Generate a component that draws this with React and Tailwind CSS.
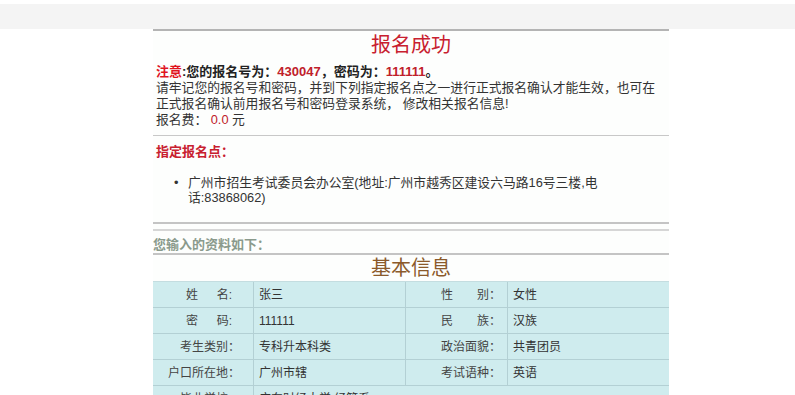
import React from "react";

const font = { fontFamily: '"Liberation Sans", "Noto Sans CJK SC", sans-serif' };

function Row({ l1, v1, l2, v2, last }) {
  return (
    <div className={`flex h-[26px] items-center ${last ? "" : "border-b border-[#b3d0d4]"}`}>
      <div className="w-[101px] h-full flex items-center justify-end pr-[13px] border-r border-[#b3d0d4] text-[#444]">{l1}</div>
      <div className="w-[152px] h-full flex items-center pl-[5px] border-r border-[#b3d0d4] text-[#333]">{v1}</div>
      <div className="w-[102px] h-full flex items-center justify-end pr-[6px] border-r border-[#b3d0d4] text-[#444]">{l2}</div>
      <div className="flex-1 h-full flex items-center pl-[5px] text-[#333]">{v2}</div>
    </div>
  );
}

function Spaced1({ a, b }) {
  return (
    <span className="inline-flex w-[46px] mr-[8px] justify-between">
      <span>{a}</span>
      <span>{b}:</span>
    </span>
  );
}

function Spaced2({ a, b }) {
  return (
    <span className="inline-flex w-[60px] justify-between">
      <span>{a}</span>
      <span>{b}：</span>
    </span>
  );
}

export default function App() {
  return (
    <div className="w-[795px] h-[395px] bg-white overflow-hidden text-[12.8px] text-[#333]" style={font}>
      <div className="h-[4px] bg-white" />
      <div className="h-[25px] bg-[#f4f4f4]" />
      <div className="ml-[153px] w-[516px] bg-[#fdfefd]">
        <div className="border-t-2 border-[#b4b4b4]" />
        <div className="h-[28px] leading-[28px] text-center text-[20px] text-[#c8202f]">报名成功</div>
        <div className="pl-[3px] mt-[5px]">
          <div className="leading-[16px] text-[13px] font-bold text-[#222]">
            <span className="text-[#e0141e]">注意</span>:您的报名号为：<span className="text-[#c0202a]">430047</span>，密码为：<span className="text-[#c0202a]">111111</span>。
          </div>
          <div className="leading-[16px]">请牢记您的报名号和密码，并到下列指定报名点之一进行正式报名确认才能生效，也可在</div>
          <div className="leading-[16px]">正式报名确认前用报名号和密码登录系统， 修改相关报名信息!</div>
          <div className="leading-[16px]">报名费： <span className="text-[#c0202a]">0.0</span> 元</div>
        </div>
        <div className="mt-[7px] border-t border-[#c8c8c8]" />
        <div className="mt-[8px] pl-[3px] leading-[16px] text-[13px] font-bold text-[#c8202f]">指定报名点：</div>
        <div className="mt-[15px] flex pl-[21px]">
          <span className="w-[14px] leading-[15px]">•</span>
          <span className="leading-[15px]">广州市招生考试委员会办公室(地址:广州市越秀区建设六马路16号三楼,电<br />话:83868062)</span>
        </div>
        <div className="mt-[17px] border-t-2 border-[#c4c4c4]" />
        <div className="mt-[5px] border-t-2 border-[#d6d6d6]" />
        <div className="mt-[6px] leading-[16px] text-[13px] font-bold text-[#8a9a8c]">您输入的资料如下：</div>
        <div className="border-t-2 border-[#c4c4c4]" />
        <div className="h-[26px] leading-[26px] text-center text-[20px] text-[#8b5a2b]">基本信息</div>
        <div className="bg-[#cfecee] border-t border-[#c4dde0] text-[12px]">
          <Row l1={<Spaced1 a="姓" b="名" />} v1="张三" l2={<Spaced2 a="性" b="别" />} v2="女性" />
          <Row l1={<Spaced1 a="密" b="码" />} v1="111111" l2={<Spaced2 a="民" b="族" />} v2="汉族" />
          <Row l1="考生类别：" v1="专科升本科类" l2="政治面貌：" v2="共青团员" />
          <Row l1="户口所在地：" v1="广州市辖" l2="考试语种：" v2="英语" />
          <div className="flex h-[26px] items-center">
            <div className="w-[101px] h-full flex items-center justify-end pr-[13px] border-r border-[#b3d0d4] text-[#444]">毕业学校：</div>
            <div className="flex-1 h-full flex items-center pl-[5px] text-[#333]">广东财经大学 经管系</div>
          </div>
        </div>
      </div>
    </div>
  );
}
